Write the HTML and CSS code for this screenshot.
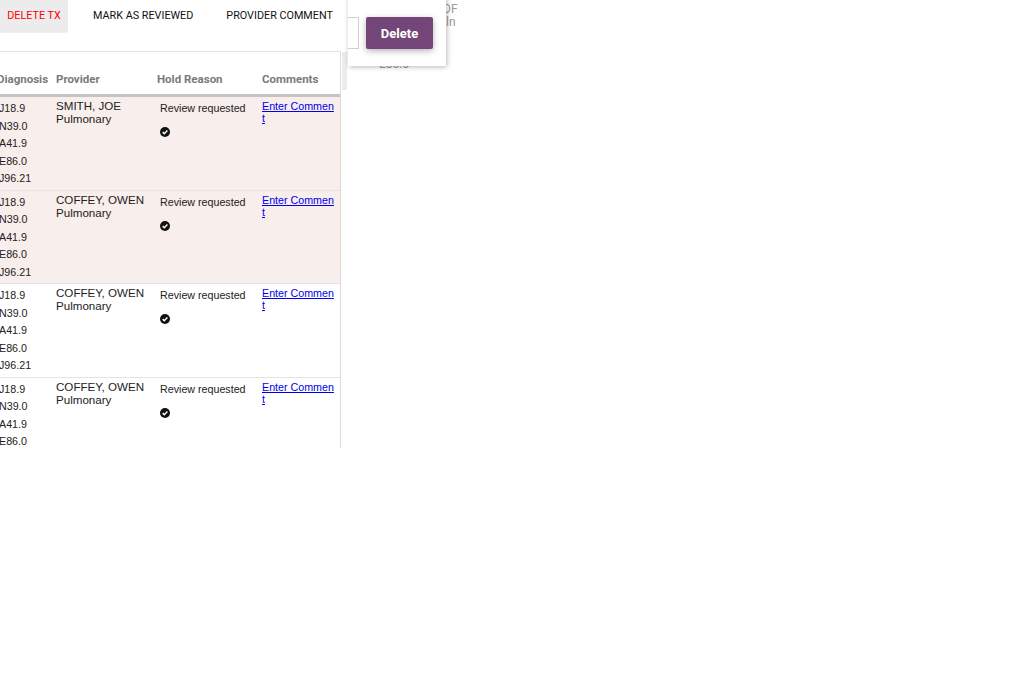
FILE: index.html
```html
<!DOCTYPE html>
<html>
<head>
<meta charset="utf-8">
<link rel="stylesheet" href="styles.css">
</head>
<body>
<div class="page">
  <div class="toolbar">
    <button class="tb-btn tb-danger">DELETE TX</button>
    <button class="tb-btn">MARK AS REVIEWED</button>
    <button class="tb-btn">PROVIDER COMMENT</button>
  </div>

  <div class="behind behind-top">DF<br>ıln</div>
  <div class="behind behind-code">E86.0</div>

  <div class="popup">
    <div class="popup-input"></div>
    <button class="popup-delete">Delete</button>
  </div>
  <div class="scroll-track"></div>

  <div class="table-wrap">
    <table class="grid">
      <colgroup>
        <col class="c-diag"><col class="c-prov"><col class="c-hold"><col class="c-comm">
      </colgroup>
      <thead>
        <tr>
          <th>Diagnosis</th><th>Provider</th><th>Hold Reason</th><th>Comments</th>
        </tr>
      </thead>
      <tbody>
        <tr class="hl">
          <td class="diag">J18.9<br>N39.0<br>A41.9<br>E86.0<br>J96.21</td>
          <td class="prov">SMITH, JOE<br>Pulmonary</td>
          <td class="hold"><div>Review requested</div><svg class="chk" viewBox="0 0 10 10"><circle cx="5" cy="5" r="5" fill="#111"/><path d="M2.7 5.1 L4.3 6.7 L7.4 3.5" fill="none" stroke="#fff" stroke-width="1.5"/></svg></td>
          <td class="comm"><a href="#">Enter Comment</a></td>
        </tr>
        <tr class="hl">
          <td class="diag">J18.9<br>N39.0<br>A41.9<br>E86.0<br>J96.21</td>
          <td class="prov">COFFEY, OWEN<br>Pulmonary</td>
          <td class="hold"><div>Review requested</div><svg class="chk" viewBox="0 0 10 10"><circle cx="5" cy="5" r="5" fill="#111"/><path d="M2.7 5.1 L4.3 6.7 L7.4 3.5" fill="none" stroke="#fff" stroke-width="1.5"/></svg></td>
          <td class="comm"><a href="#">Enter Comment</a></td>
        </tr>
        <tr>
          <td class="diag">J18.9<br>N39.0<br>A41.9<br>E86.0<br>J96.21</td>
          <td class="prov">COFFEY, OWEN<br>Pulmonary</td>
          <td class="hold"><div>Review requested</div><svg class="chk" viewBox="0 0 10 10"><circle cx="5" cy="5" r="5" fill="#111"/><path d="M2.7 5.1 L4.3 6.7 L7.4 3.5" fill="none" stroke="#fff" stroke-width="1.5"/></svg></td>
          <td class="comm"><a href="#">Enter Comment</a></td>
        </tr>
        <tr>
          <td class="diag">J18.9<br>N39.0<br>A41.9<br>E86.0<br>J96.21</td>
          <td class="prov">COFFEY, OWEN<br>Pulmonary</td>
          <td class="hold"><div>Review requested</div><svg class="chk" viewBox="0 0 10 10"><circle cx="5" cy="5" r="5" fill="#111"/><path d="M2.7 5.1 L4.3 6.7 L7.4 3.5" fill="none" stroke="#fff" stroke-width="1.5"/></svg></td>
          <td class="comm"><a href="#">Enter Comment</a></td>
        </tr>
      </tbody>
    </table>
  </div>
</div>
</body>
</html>
```

FILE: styles.css
```css
html, body {
  margin: 0;
  padding: 0;
  background: #fff;
  overflow: hidden;
}

.page {
  position: relative;
  width: 1034px;
  height: 682px;
  font-family: "Liberation Sans", Arial, sans-serif;
  color: #222;
}

.toolbar {
  display: flex;
  gap: 17px;
  height: 33px;
}

.tb-btn {
  font-family: Roboto, "Liberation Sans", sans-serif;
  font-size: 10.8px;
  font-weight: 400;
  color: #111;
  background: transparent;
  border: 0;
  padding: 0 8px 2px;
  height: 33px;
  border-radius: 0 0 3px 0;
  white-space: nowrap;
  cursor: pointer;
}

.tb-danger {
  color: #f00;
  background: #ececec;
  padding: 0 7px 2px;
  width: 68px;
}

.behind {
  position: absolute;
  color: #9a9a9a;
  font-family: Roboto, sans-serif;
  font-size: 12px;
}

.behind-top {
  left: 443px;
  top: 3px;
  line-height: 13px;
}

.behind-code {
  left: 379px;
  top: 57px;
  font-size: 12px;
}

.popup {
  position: absolute;
  left: 348px;
  top: -10px;
  width: 98px;
  height: 76px;
  background: #fff;
  box-shadow: 1px 1px 5px rgba(0, 0, 0, 0.28);
  overflow: hidden;
  z-index: 2;
}

.popup-input {
  position: absolute;
  left: -20px;
  top: 27px;
  width: 29px;
  height: 30px;
  border: 1px solid #cfcfcf;
}

.popup-delete {
  position: absolute;
  left: 18px;
  top: 27px;
  width: 67px;
  height: 32px;
  border: 0;
  border-radius: 2px;
  background: #744578;
  color: #fff;
  font-family: Roboto, sans-serif;
  font-weight: 700;
  font-size: 13px;
  box-shadow: 0 2px 6px rgba(0, 0, 0, 0.3);
}

.scroll-track {
  position: absolute;
  left: 342px;
  top: 52px;
  width: 5px;
  height: 38px;
  background: #ececec;
}

.table-wrap {
  margin-top: 18px;
  margin-left: -8px;
  width: 348px;
  height: 397px;
  overflow: hidden;
  border-right: 1px solid #dcdcdc;
}

.grid {
  border-collapse: collapse;
  table-layout: fixed;
  width: 348px;
}

.c-diag { width: 59px; }
.c-prov { width: 101px; }
.c-hold { width: 105px; }
.c-comm { width: 83px; }

.grid th {
  font-family: Roboto, sans-serif;
  font-size: 11.5px;
  font-weight: 700;
  color: #7a7a7a;
  text-align: left;
  padding: 20px 0 8px 5px;
  height: 14px;
  border-top: 1px solid #e3e3e3;
  border-bottom: 3px solid #c4c4c4;
  box-shadow: inset 1px 0 0 #fff;
  white-space: nowrap;
}

.grid td {
  vertical-align: top;
  border-bottom: 1px solid #e4e4e4;
  font-size: 10.7px;
}

.grid tr.hl td {
  background: #f8eeeb;
}

.diag {
  padding: 3px 0 2px 7px;
  line-height: 17.5px;
}

.prov {
  padding: 2px 0 0 5px;
  font-size: 11.6px !important;
  line-height: 13px;
}

.hold {
  padding: 4px 0 0 8px;
  line-height: 14px;
}

.chk {
  display: block;
  width: 10px;
  height: 10px;
  margin-top: 12px;
}

.comm {
  padding: 3px 5px 0 5px;
  line-height: 12px;
  word-break: break-all;
}

.comm a {
  color: #0000ee;
  text-decoration: underline;
}
```
